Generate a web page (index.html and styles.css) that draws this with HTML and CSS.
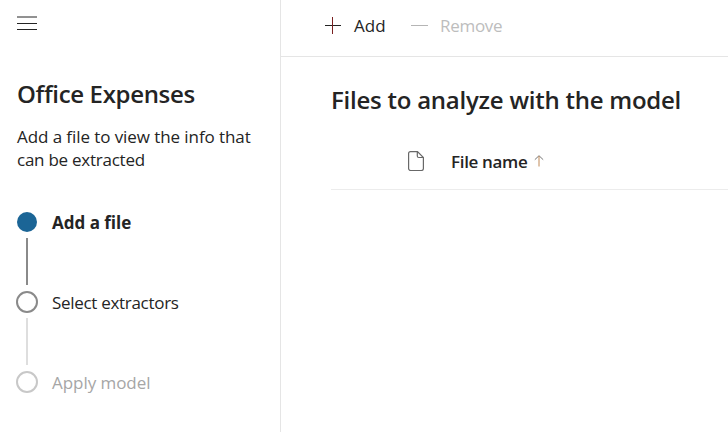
FILE: index.html
```html
<!DOCTYPE html>
<html lang="en">
<head>
<meta charset="utf-8">
<title>Office Expenses</title>
<link rel="stylesheet" href="styles.css">
</head>
<body>
<div class="app">
  <aside class="sidebar">
    <svg class="menu" width="20" height="16" viewBox="0 0 20 16"><path d="M0 1h20M0 7.5h20M0 13.5h20"/></svg>
    <h1 class="title">Office Expenses</h1>
    <p class="intro">Add a file to view the info that<br><span class="intro-end">can be extracted</span></p>
    <ol class="steps">
      <li class="step current"><i class="dot"></i><span class="label">Add a file</span></li>
      <li class="line"></li>
      <li class="step next"><i class="dot"></i><span class="label">Select extractors</span></li>
      <li class="line faint"></li>
      <li class="step disabled"><i class="dot"></i><span class="label">Apply model</span></li>
    </ol>
  </aside>
  <main class="main">
    <nav class="toolbar">
      <svg class="plus" width="17" height="17" viewBox="0 0 17 17"><path d="M1 8.5h16"/><path class="stem" d="M8.5 0v17"/></svg>
      <span class="add">Add</span>
      <svg class="minus" width="17" height="17" viewBox="0 0 17 17"><path d="M0 8.5h17"/></svg>
      <span class="remove">Remove</span>
    </nav>
    <section class="content">
      <h2 class="heading">Files to analyze with the model</h2>
      <div class="columns">
        <svg class="file" width="16" height="20" viewBox="0 0 16 20"><path d="M2.5.6h7L15.4 6.5v11a2 2 0 0 1-2 2h-10.800a2 2 0 0 1-2-2v-15a1.900 1.900 0 0 1 1.900-1.900zM9.300.8v4.200a1.500 1.500 0 0 0 1.500 1.500h4.400"/></svg>
        <span class="filename">File name</span>
        <svg class="arrow" width="10" height="12" viewBox="0 0 10 12"><path d="M.8 4.700 5 .7 9.200 4.700"/><path class="stem" d="M5 1v10.500"/></svg>
      </div>
    </section>
  </main>
</div>
</body>
</html>
```
FILE: styles.css
```css
* { box-sizing: border-box; }
body {
  margin: 0;
  background: #fff;
  color: #242424;
  font: 400 17px/23px "Open Sans", "Noto Sans", sans-serif;
  overflow: hidden;
}
.app { display: flex; width: 728px; height: 432px; }
.sidebar { width: 281px; flex: none; padding: 16px 0 0 17px; border-right: 1px solid #e5e5e5; }
svg { display: block; flex: none; fill: none; stroke: #242424; stroke-width: 1; }
h1, h2, p, ol { margin: 0; padding: 0; font-weight: inherit; white-space: nowrap; }
.title { margin-top: 46px; font-size: 24px; line-height: 32px; font-weight: 600; letter-spacing: -0.330px; }
.intro { margin-top: 15px; letter-spacing: -0.080px; }
.intro-end { letter-spacing: -0.250px; }
.steps { list-style: none; margin-top: 40px; }
.step { display: flex; align-items: center; height: 22px; }
.dot { width: 22px; height: 22px; margin-left: -1px; border: 2px solid #8a8a8a; border-radius: 50%; flex: none; }
.label { margin-left: 14px; }
.next .label { letter-spacing: -0.300px; }
.current .dot { width: 20px; height: 20px; margin: 0 1px 0 0; border: 0; background: #1b6596; }
.current .label { font-weight: 700; }
.disabled { color: #a6a6a6; }
.disabled .label { letter-spacing: -0.050px; }
.disabled .dot { border-color: #c8c8c8; }
.line { width: 2px; height: 47px; margin: 5px 0 6px 9px; background: #8a8a8a; }
.faint { background: #dedede; }
.main { flex: 1; min-width: 0; }
.toolbar { display: flex; align-items: center; height: 57px; padding: 0 0 6px 43px; border-bottom: 1px solid #e5e5e5; }
.plus .stem { stroke: #7a2020; }
.add { width: 32px; margin: 0 25px 0 13px; }
.minus { stroke: #b5b5b5; }
.remove { margin-left: 12px; color: #bdbdbd; letter-spacing: -0.300px; }
.content { padding: 27px 0 0 50px; }
.heading { font-size: 24px; line-height: 32px; font-weight: 600; letter-spacing: -0.240px; }
.columns { display: flex; align-items: center; height: 74px; padding: 17px 0 0 77px; border-bottom: 1px solid #ececec; }
.file { stroke: #686868; stroke-width: 1.200; }
.filename { margin-left: 27px; font-weight: 600; letter-spacing: -0.330px; white-space: nowrap; width: 77px; }
.arrow { margin-left: 6px; stroke: #777; }
.arrow .stem { stroke: #c08a58; }
```
